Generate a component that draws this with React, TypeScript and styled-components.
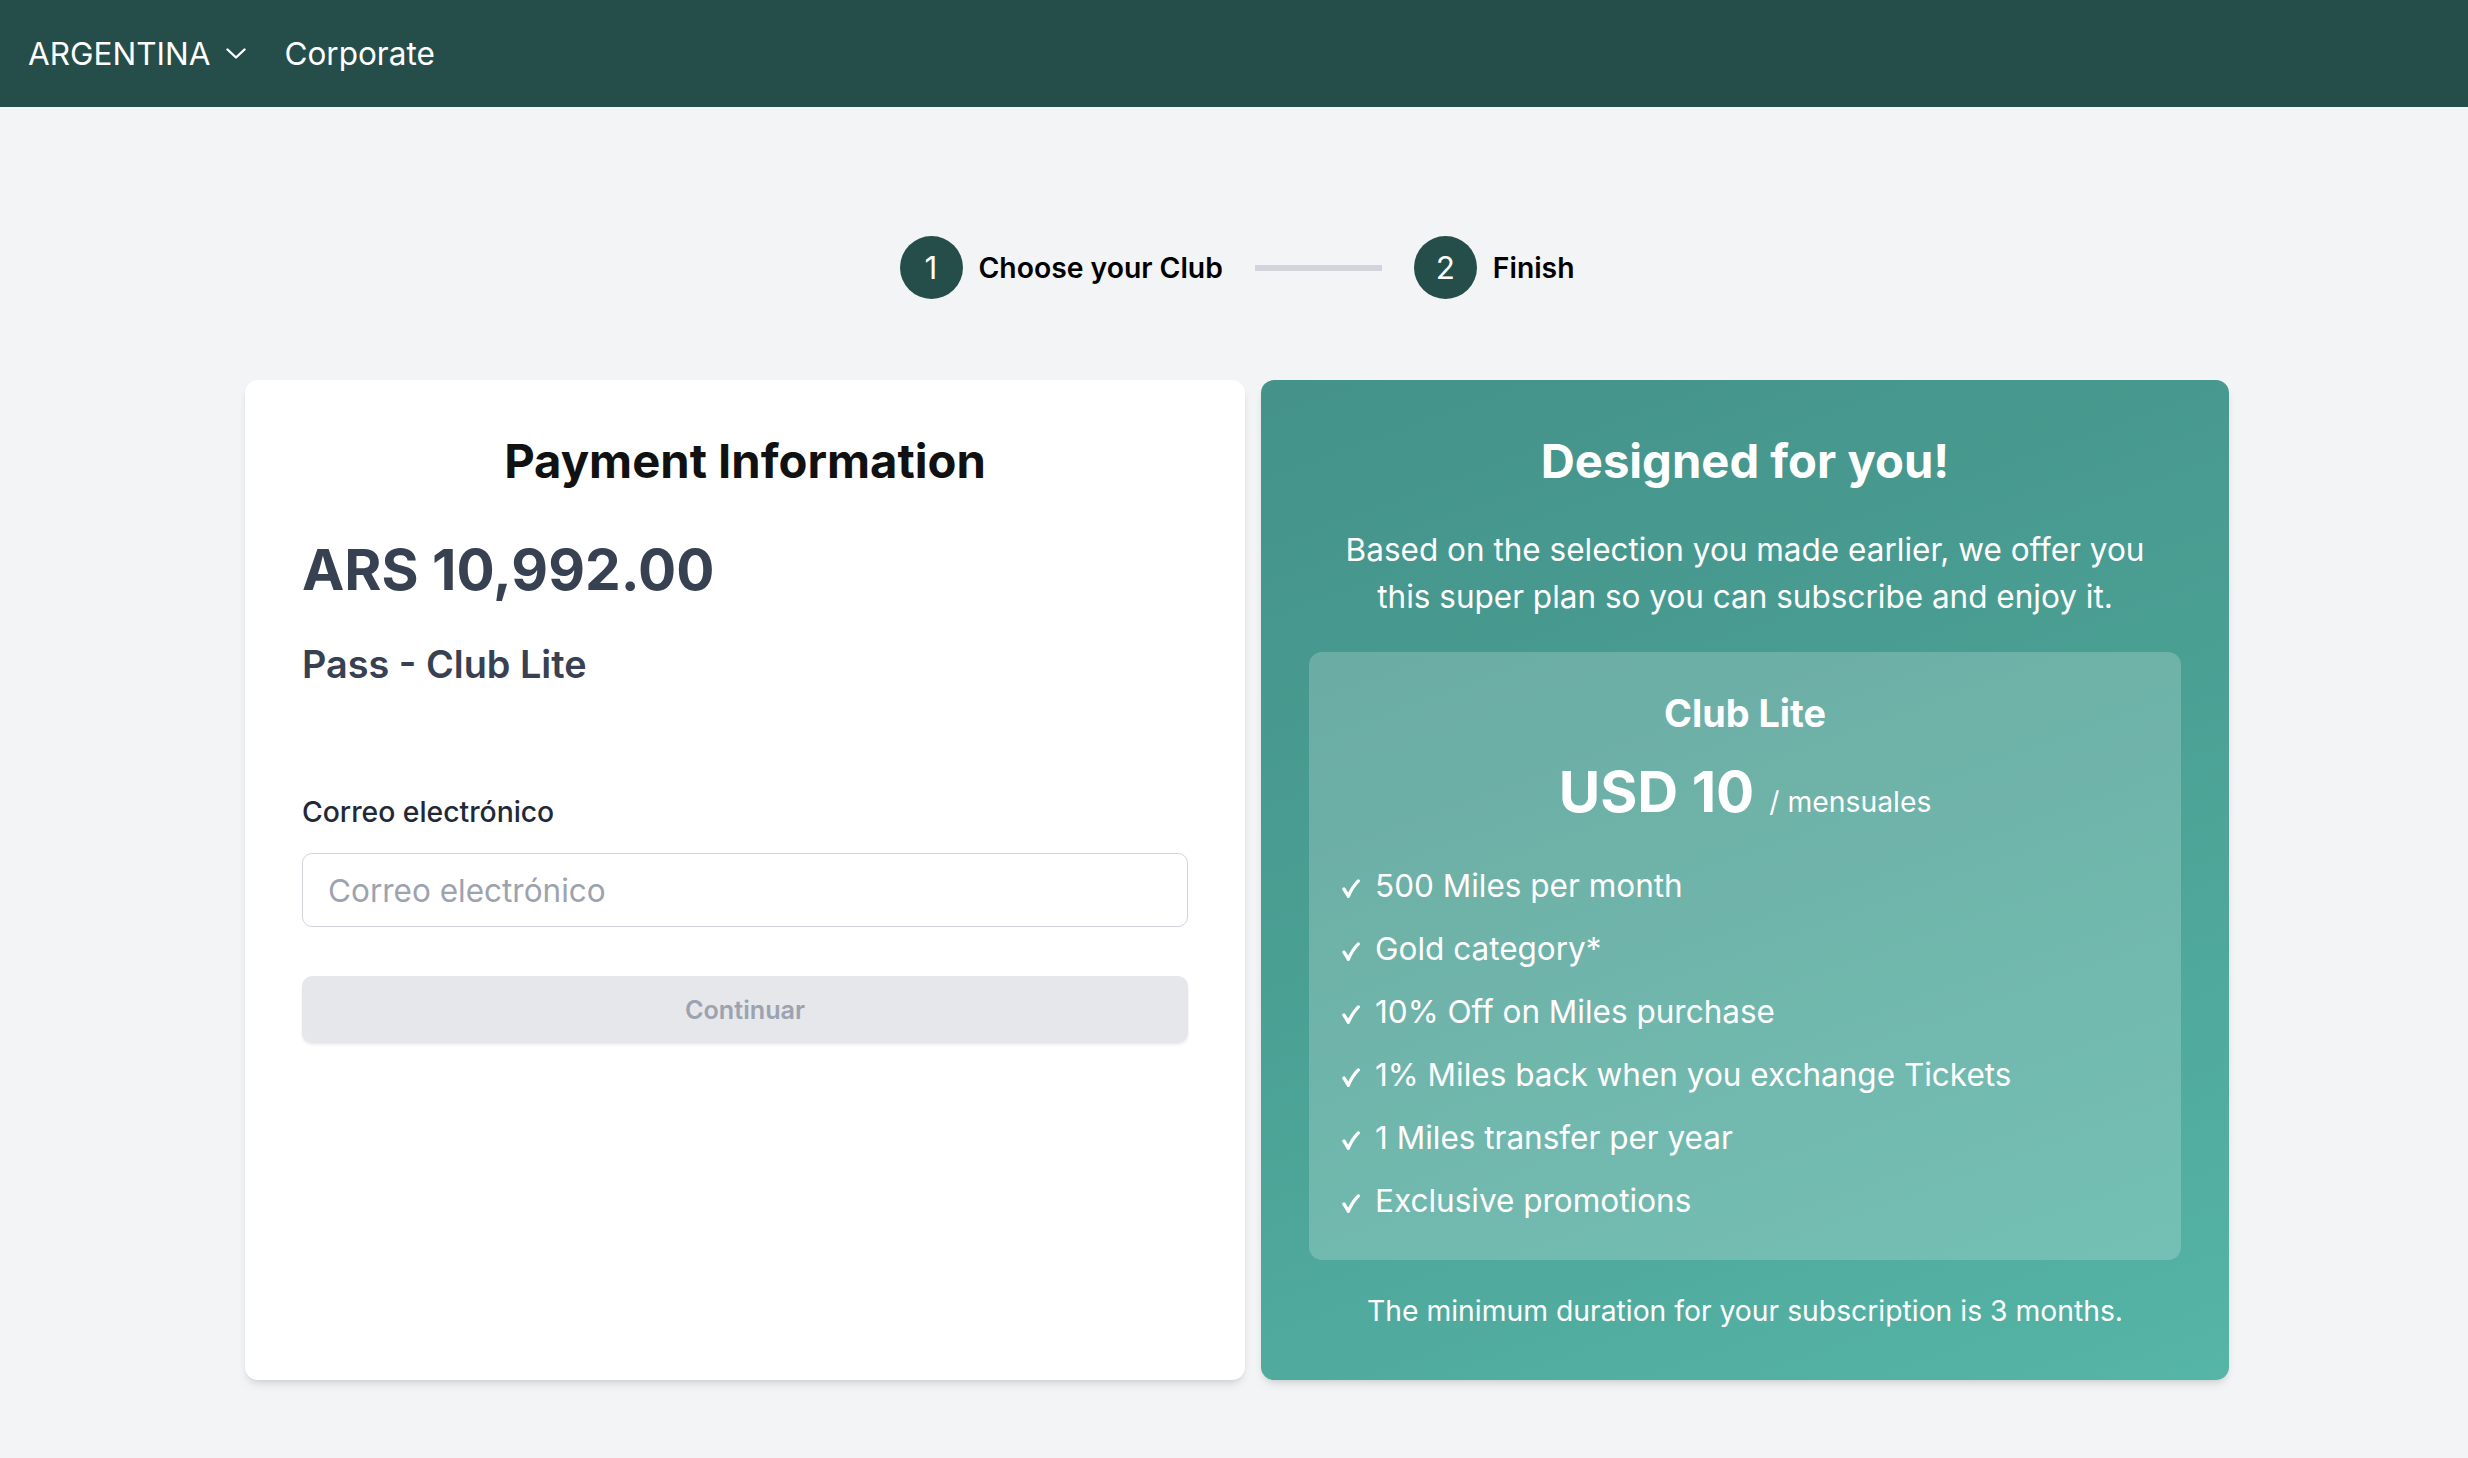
import styled, { createGlobalStyle } from "styled-components";

const GlobalStyle = createGlobalStyle`
  html, body {
    margin: 0;
    padding: 0;
  }
  body {
    font-family: Inter, "Noto Sans", "Liberation Sans", sans-serif;
    background: #f3f4f6;
  }
  * {
    box-sizing: border-box;
  }
`;

const Page = styled.div`
  min-height: 1458px;
  background: #f3f4f6;
`;

const TopBar = styled.header`
  display: flex;
  align-items: center;
  height: 107px;
  padding: 0 28px;
  background: #254e4a;
  color: #fff;
  font-size: 31.5px;
  font-weight: 400;
`;

const CountryPicker = styled.div`
  display: flex;
  align-items: center;
  gap: 16px;
  cursor: pointer;
`;

const NavLink = styled.a`
  margin-left: 38px;
  color: #fff;
  text-decoration: none;
`;

const Main = styled.main`
  padding: 129px 0 0 6px;
`;

const Stepper = styled.ol`
  display: flex;
  justify-content: center;
  align-items: center;
  margin: 0;
  padding: 0;
  list-style: none;
`;

const Step = styled.li`
  display: flex;
  align-items: center;
  gap: 16px;
`;

const StepNumber = styled.span`
  display: flex;
  align-items: center;
  justify-content: center;
  width: 63px;
  height: 63px;
  border-radius: 50%;
  background: #254e4a;
  color: #fff;
  font-size: 31.5px;
  line-height: 1;
`;

const StepLabel = styled.span`
  font-size: 28.3px;
  font-weight: 600;
  color: #000;
`;

const StepDivider = styled.li`
  width: 127px;
  height: 6px;
  margin: 0 32px;
  background: #d1d5db;
`;

const Cards = styled.div`
  display: flex;
  justify-content: center;
  align-items: stretch;
  gap: 16px;
  margin-top: 81px;
`;

const PaymentCard = styled.section`
  width: 1000px;
  padding: 53px 57px;
  background: #fff;
  border-radius: 13px;
  box-shadow: 0 6px 10px -2px rgba(0, 0, 0, 0.1), 0 3px 6px -3px rgba(0, 0, 0, 0.1);
`;

const OfferCard = styled.section`
  width: 968px;
  padding: 53px 48px 47px;
  border-radius: 13px;
  background: linear-gradient(160deg, #44928a 0%, #4a9f93 45%, #55b5a7 100%);
  color: #fff;
  text-align: center;
  box-shadow: 0 6px 10px -2px rgba(0, 0, 0, 0.1), 0 3px 6px -3px rgba(0, 0, 0, 0.1);
`;

const CardTitle = styled.h2<{ $light?: boolean }>`
  margin: 0;
  text-align: center;
  font-size: 47.2px;
  line-height: 56.7px;
  font-weight: 700;
  color: ${({ $light }) => ($light ? "#fff" : "#111")};
`;

const Amount = styled.div`
  margin-top: 48px;
  font-size: 56.7px;
  line-height: 63px;
  font-weight: 700;
  color: #374151;
`;

const PlanName = styled.div`
  margin-top: 38px;
  font-size: 37.8px;
  line-height: 50.4px;
  font-weight: 600;
  color: #374151;
`;

const FieldLabel = styled.label`
  display: block;
  margin-top: 101px;
  font-size: 28.3px;
  line-height: 44px;
  font-weight: 500;
  color: #1f2937;
`;

const EmailInput = styled.input`
  display: block;
  width: 100%;
  height: 74px;
  margin-top: 19px;
  padding: 0 25px;
  border: 1.5px solid #d1d5db;
  border-radius: 10px;
  background: #fff;
  font-family: inherit;
  font-size: 31.5px;
  color: #111827;
  outline: none;

  &::placeholder {
    color: #9ca3af;
  }
`;

const ContinueButton = styled.button`
  display: block;
  width: 100%;
  height: 67px;
  margin-top: 49px;
  border: none;
  border-radius: 10px;
  background: #e5e7eb;
  color: #9ca3af;
  font-family: inherit;
  font-size: 25.2px;
  font-weight: 600;
  box-shadow: 0 2px 3px rgba(0, 0, 0, 0.08);
  cursor: not-allowed;
`;

const Intro = styled.p`
  max-width: 840px;
  margin: 36px auto 0;
  font-size: 31.5px;
  line-height: 47px;
`;

const PlanBox = styled.div`
  margin-top: 32px;
  padding: 36px 32px 37px;
  border-radius: 13px;
  background: rgba(255, 255, 255, 0.2);
`;

const PlanTitle = styled.h3`
  margin: 0;
  font-size: 37.8px;
  line-height: 50.4px;
  font-weight: 700;
`;

const Price = styled.div`
  display: flex;
  justify-content: center;
  align-items: baseline;
  gap: 15px;
  margin-top: 22px;
`;

const PriceValue = styled.span`
  font-size: 56.7px;
  line-height: 63px;
  font-weight: 700;
`;

const PriceUnit = styled.span`
  font-size: 28.3px;
`;

const Features = styled.ul`
  display: flex;
  flex-direction: column;
  gap: 19px;
  margin: 41px 0 0;
  padding: 0 0 0 1px;
  list-style: none;
  text-align: left;
`;

const Feature = styled.li`
  font-size: 31.5px;
  line-height: 44px;
`;

const CheckMark = styled.svg`
  display: inline-block;
  width: 18px;
  height: 19px;
  margin-right: 15px;
  vertical-align: -1px;
`;

const Note = styled.p`
  margin: 29px 0 0;
  font-size: 28.3px;
  line-height: 44px;
`;

const features = [
  "500 Miles per month",
  "Gold category*",
  "10% Off on Miles purchase",
  "1% Miles back when you exchange Tickets",
  "1 Miles transfer per year",
  "Exclusive promotions",
];

function Chevron() {
  return (
    <svg width="20" height="12" viewBox="0 0 20 12" fill="none">
      <path d="M1.5 1.5 L10 9.5 L18.5 1.5" stroke="#fff" strokeWidth="2.4" strokeLinecap="round" strokeLinejoin="round" />
    </svg>
  );
}

function Check() {
  return (
    <CheckMark viewBox="0 0 18 19" fill="none" aria-hidden="true">
      <path d="M1.9 10 Q4.2 13.3 6.3 17.3 Q10.4 7.8 16.3 1.9" stroke="#fff" strokeWidth="3.3" strokeLinecap="round" strokeLinejoin="round" />
    </CheckMark>
  );
}

export default function App() {
  return (
    <Page>
      <GlobalStyle />
      <TopBar>
        <CountryPicker>
          ARGENTINA
          <Chevron />
        </CountryPicker>
        <NavLink href="#">Corporate</NavLink>
      </TopBar>

      <Main>
        <Stepper>
          <Step>
            <StepNumber>1</StepNumber>
            <StepLabel>Choose your Club</StepLabel>
          </Step>
          <StepDivider />
          <Step>
            <StepNumber>2</StepNumber>
            <StepLabel>Finish</StepLabel>
          </Step>
        </Stepper>

        <Cards>
          <PaymentCard>
            <CardTitle>Payment Information</CardTitle>
            <Amount>ARS 10,992.00</Amount>
            <PlanName>Pass - Club Lite</PlanName>
            <FieldLabel htmlFor="email">Correo electrónico</FieldLabel>
            <EmailInput id="email" type="email" placeholder="Correo electrónico" />
            <ContinueButton disabled>Continuar</ContinueButton>
          </PaymentCard>

          <OfferCard>
            <CardTitle $light>Designed for you!</CardTitle>
            <Intro>
              Based on the selection you made earlier, we offer you this super plan so you can subscribe and enjoy it.
            </Intro>
            <PlanBox>
              <PlanTitle>Club Lite</PlanTitle>
              <Price>
                <PriceValue>USD 10</PriceValue>
                <PriceUnit>/ mensuales</PriceUnit>
              </Price>
              <Features>
                {features.map((f) => (
                  <Feature key={f}>
                    <Check />
                    {f}
                  </Feature>
                ))}
              </Features>
            </PlanBox>
            <Note>The minimum duration for your subscription is 3 months.</Note>
          </OfferCard>
        </Cards>
      </Main>
    </Page>
  );
}
